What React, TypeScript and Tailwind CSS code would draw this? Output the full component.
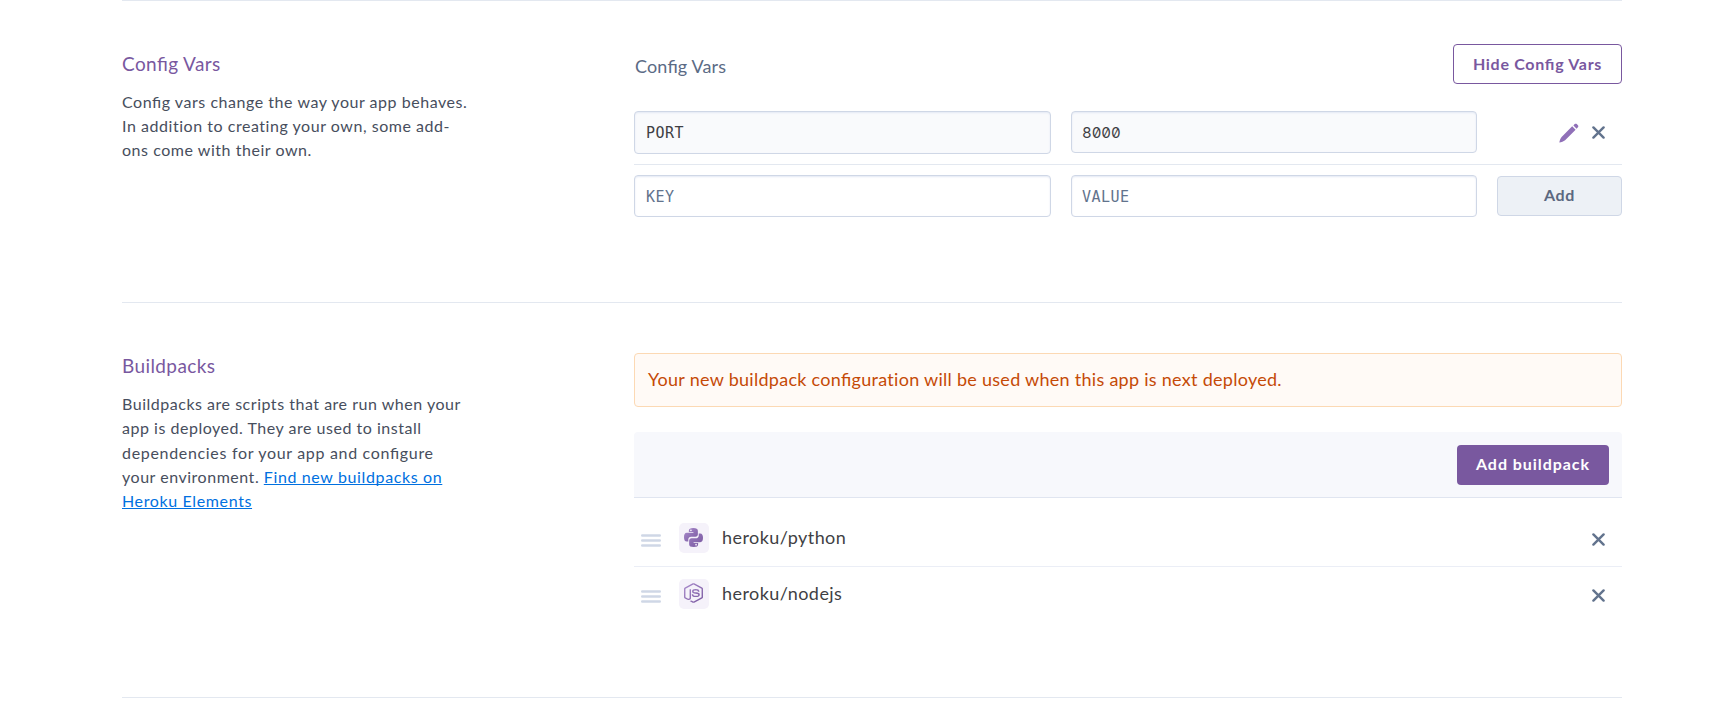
import type { ReactNode } from "react";
import { FaNodeJs } from "react-icons/fa";

function Lig({ children }: { children: ReactNode }) {
  return <span className="[font-feature-settings:'liga'_1]">{children}</span>;
}

function CloseIcon() {
  return (
    <svg className="size-[13px]" viewBox="0 0 13 13" fill="none" stroke="#62738d" strokeWidth="2.4" strokeLinecap="round">
      <path d="M1.4 1.4 11.6 11.6M11.6 1.4 1.4 11.6" />
    </svg>
  );
}

function PencilIcon() {
  return (
    <svg className="size-5" viewBox="0 0 20 20" fill="#9070b8">
      <path d="M13.2 3.3 16.6 6.7 6.1 17.2C4.6 18.4 2.4 19 .3 19.6c.5-2.1 1-4.3 2.3-5.7z" />
      <path d="M14.4 2.4 15.7 1.1c.6-.6 1.5-.6 2.1 0l1.1 1.1c.6.6.6 1.5 0 2.1l-1.3 1.4z" />
    </svg>
  );
}

function PythonIcon() {
  const half =
    "M5.1 2.9C5.1.8 6.6 0 9.8 0s4.8.8 4.8 2.9v3.8c0 1.5-1 2.5-2.5 2.5H7.6c-1.9 0-3.1 1.2-3.1 3v2.1H2.9C.9 14.3 0 12.6 0 9.700S.9 5.100 2.900 5.100h7V4.300H5.100zM7.300 1.500a.9.9 0 1 0 0 1.800.9.9 0 1 0 0-1.800z";
  return (
    <svg className="size-[19px]" viewBox="0 0 20 20" fill="url(#violet)" fillRule="evenodd">
      <path d={half} />
      <path d={half} transform="rotate(180 10 10)" fill="url(#violet-turned)" />
    </svg>
  );
}

function Grip() {
  return (
    <svg className="h-[13px] w-5" viewBox="0 0 20 13" stroke="#cfd7e6" strokeWidth="2.4" strokeLinecap="round">
      <path d="M1.2 1.500H18.800M1.200 6.500H18.800M1.200 11.500H18.800" />
    </svg>
  );
}

const field =
  "rounded-[4px] border border-[#cfd7e6] pr-[11px] font-['DejaVu_Sans_Mono',monospace] text-[15px] tracking-[0.5px] shadow-[inset_0_1px_2px_#e3e8f4] outline-none placeholder:text-[#62738d] placeholder:opacity-100";

function Section({ title, children, text, textClass }: { title: ReactNode; text: ReactNode; textClass: string; children: ReactNode }) {
  return (
    <section className="flex border-b border-[#e3e8f0]">
      <div className="w-[512px] shrink-0">
        <h2 className="mt-[49px] text-[19px] leading-7 tracking-[0.4px] text-[#79589f]">{title}</h2>
        <p className={`w-[350px] text-[16px] leading-[24.3px] text-[#474e5d] ${textClass}`}>{text}</p>
      </div>
      <div className="flex-1">{children}</div>
    </section>
  );
}

function Buildpack({ name, icon }: { name: string; icon: ReactNode }) {
  return (
    <li className="flex h-14 items-center border-b border-[#ebeef6] pr-[17.5px] pl-[7px] last:border-transparent">
      <div className="pt-[3px]"><Grip /></div>
      <div className="mb-[2px] ml-[18px] flex size-[30px] items-center justify-center rounded-[5px] bg-[#f5f2fa] pr-[1px] pb-[1px]">{icon}</div>
      <span className="ml-[13px] flex-1 pb-[2px] text-[18px] tracking-[0.43px] text-[#3f3f44]">{name}</span>
      <button className="pt-[2px]" aria-label="Remove"><CloseIcon /></button>
    </li>
  );
}

export default function App() {
  return (
    <main className="h-[712px] overflow-hidden bg-white pr-[110px] pl-[122px] font-[Lato,sans-serif]">
      <svg className="absolute size-0" aria-hidden="true">
        <linearGradient id="violet" x1="0" y1="0" x2="1" y2="1">
          <stop stopColor="#ab8dce" />
          <stop offset="1" stopColor="#79589f" />
        </linearGradient>
        <linearGradient id="violet-turned" x1="0" y1="0" x2="1" y2="1">
          <stop stopColor="#79589f" />
          <stop offset="1" stopColor="#9a7bc0" />
        </linearGradient>
      </svg>
      <div className="h-px bg-[#e3e8f0]" />
      <div className="flex flex-col [&>section:first-child]:h-[302px] [&>section:last-child]:h-[395px]">
        <Section
          title={<><Lig>Config</Lig> Vars</>}
          textClass="mt-[11.7px] tracking-[0.54px]"
          text={<><Lig>Config</Lig> vars change the way your app behaves. In addition to creating your own, some add-ons come with their own.</>}
        >
          <div className="mt-[43px] flex h-10 items-center justify-between">
            <h3 className="pt-[5px] pl-px text-[18px] tracking-[0.15px] text-[#5b6b85]"><Lig>Config</Lig> Vars</h3>
            <button className="h-10 w-[169px] rounded-[4px] border border-[#79589f] pb-px text-[16px] font-bold tracking-[0.7px] text-[#79589f]">
              Hide <Lig>Config</Lig> Vars
            </button>
          </div>
          <div className="mt-[27px] grid grid-cols-[417px_406px_125px] items-start gap-x-5 border-b border-[#e3e8f0] pb-[10px]">
            <input className={`${field} h-[43px] bg-[#f9fafc] pl-[11px] text-[#3f3f44]`} readOnly value="PORT" />
            <input className={`${field} h-[42px] bg-[#f9fafc] pl-[10px] text-[#3f3f44] font-['Inter',sans-serif]! tracking-[-0.05px]! [font-feature-settings:'zero'_1,'tnum'_1]`} readOnly value="8000" />
            <div className="flex h-[43px] items-center justify-end gap-[13px] pr-[17.5px]">
              <button aria-label="Edit"><PencilIcon /></button>
              <button aria-label="Remove"><CloseIcon /></button>
            </div>
          </div>
          <div className="mt-[10px] grid grid-cols-[417px_406px_125px] items-center gap-x-5">
            <input className={`${field} h-[42px] pt-[2px] pl-[11px]`} placeholder="KEY" />
            <input className={`${field} h-[42px] pt-[2px] pl-[10px]`} placeholder="VALUE" />
            <button className="h-10 rounded-[4px] border border-[#cfd7e6] bg-[#edf1f6] pb-[3px] text-[16px] font-bold tracking-[0.6px] text-[#5b6880]">Add</button>
          </div>
        </Section>
        <Section
          title="Buildpacks"
          textClass="mt-3 tracking-[0.52px]"
          text={<>Buildpacks are scripts that are run when your app is deployed. They are used to install <span className="tracking-[0.68px]">dependencies for your app and <Lig>configure</Lig></span><br />your environment. <a href="#elements" className="tracking-[0.63px] text-[#0070e0] underline decoration-1 underline-offset-[1px] [text-decoration-skip-ink:none]">Find new buildpacks on<br />Heroku Elements</a></>}
        >
          <div className="mt-[50px] flex h-[54px] items-center rounded-[4px] border border-[#fcd9b4] bg-[#fffaf6] pl-[13px] text-[18px] tracking-[0.28px] text-[#c54a07]">
            <p className="pb-px">Your new buildpack <Lig>config</Lig>uration will be used when this app is next deployed.</p>
          </div>
          <div className="mt-[25px] flex h-[66px] items-center justify-end rounded-t-[4px] border-b border-[#e0e5f0] bg-[#f7f8fc] pr-[13px]">
            <button className="h-10 w-[152px] rounded-[4px] bg-[#79589f] pb-px text-[16px] font-bold tracking-[0.95px] text-white">Add buildpack</button>
          </div>
          <ul className="pt-[13px]">
            <Buildpack name="heroku/python" icon={<PythonIcon />} />
            <Buildpack name="heroku/nodejs" icon={<FaNodeJs fill="url(#violet)" preserveAspectRatio="none" className="h-5 w-[19px]" />} />
          </ul>
        </Section>
      </div>
    </main>
  );
}
